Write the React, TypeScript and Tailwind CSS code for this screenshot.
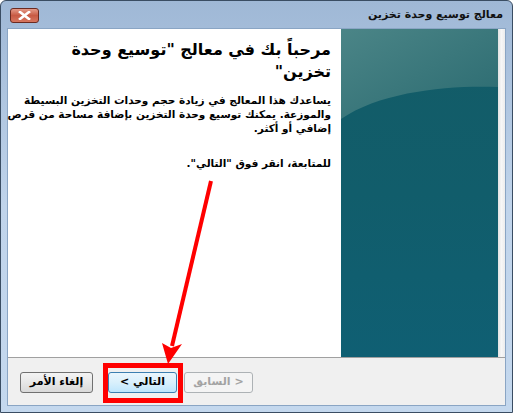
export default function App() {
  const arabic = { fontFamily: '"DejaVu Sans", Tahoma, sans-serif' }

  return (
    <div className="relative w-[513px] h-[413px] overflow-hidden bg-white" style={arabic}>
      {/* window frame */}
      <div className="flex flex-col w-[513px] h-[413px] rounded-t-[6px] border border-[#3a4d63] bg-gradient-to-b from-[#9fb8d6] via-[#c0d4eb] to-[#c4d8ee]">
        {/* title bar */}
        <div className="flex items-center justify-between h-[27px] pl-[9px] pr-[9px] pt-[2px]">
          <div className="flex items-center justify-center w-[29px] h-[15px] rounded-[3px] border border-[#6b2a20] bg-gradient-to-b from-[#e49a88] via-[#c85a44] to-[#d6765f]">
            <svg width="13" height="9" viewBox="0 0 13 9">
              <path d="M2 1 L11 8 M11 1 L2 8" stroke="#ffffff" strokeWidth="2.6" strokeLinecap="square" />
            </svg>
          </div>
          <div dir="rtl" className="text-[11px] font-bold text-[#111111]">
            معالج توسيع وحدة تخزين
          </div>
        </div>

        {/* client area */}
        <div className="flex flex-col flex-1 mx-[6px] mb-[6px] border border-[#8aa5c4] bg-[#f0f0f0]">
          <div className="flex flex-1 bg-white">
            <div className="w-[333px] shrink-0 pt-[10px] pr-[10px] pl-[12px]" dir="rtl">
              <h1 className="text-[16px] font-bold leading-[22px] text-black">
                مرحباً بك في معالج "توسيع وحدة
                <br />
                تخزين"
              </h1>
              <p className="mt-[10px] text-[10.5px] font-bold leading-[14px] text-black whitespace-nowrap">
                يساعدك هذا المعالج في زيادة حجم وحدات التخزين البسيطة
                <br />
                والموزعة. يمكنك توسيع وحدة التخزين بإضافة مساحة من قرص
                <br />
                إضافي أو أكثر.
              </p>
              <p className="mt-[21px] text-[10.5px] font-bold leading-[14px] text-black">
                للمتابعة، انقر فوق "التالي".
              </p>
            </div>
            {/* teal side panel */}
            <div className="relative w-[157px] shrink-0 overflow-hidden bg-gradient-to-b from-[#135c67] via-[#115d6b] to-[#0f5f73]">
              <svg className="absolute inset-0" width="157" height="330" viewBox="0 0 157 330">
                <defs>
                  <linearGradient id="top" x1="0" y1="0" x2="1" y2="1">
                    <stop offset="0" stopColor="#4b8587" />
                    <stop offset="1" stopColor="#2a6a70" />
                  </linearGradient>
                </defs>
                <path d="M0 0 H157 V58 C110 56 40 62 0 90 Z" fill="url(#top)" />
              </svg>
            </div>
            <div className="w-[7px] shrink-0 bg-gradient-to-r from-[#e3e3e3] via-[#f7f7f7] to-[#ececec]" />
          </div>

          {/* bottom button bar */}
          <div className="flex items-center h-[48px] border-t border-[#a0a0a0] bg-[#f0f0f0] pl-[12px] pt-[2px]" dir="ltr">
            <button className="w-[73px] h-[21px] rounded-[3px] border border-[#707070] bg-gradient-to-b from-[#f3f3f3] via-[#e8e8e8] to-[#d9d9d9] text-[11px] font-bold text-black" dir="rtl" style={arabic}>
              إلغاء الأمر
            </button>
            <button className="ml-[15px] w-[69px] h-[21px] rounded-[3px] border border-[#3c7fb1] bg-gradient-to-b from-[#eaf6fd] via-[#d9f0fc] to-[#bee6fd] text-[11px] font-bold text-black" dir="rtl" style={arabic}>
              التالي &gt;
            </button>
            <button className="ml-[7px] w-[69px] h-[21px] rounded-[3px] border border-[#adb2b5] bg-[#f4f4f4] text-[11px] font-bold text-[#a3a3a3]" dir="rtl" style={arabic}>
              &lt; السابق
            </button>
          </div>
        </div>
      </div>

      {/* red annotation: box */}
      <div className="absolute left-[103px] top-[363px] w-[80px] h-[40px] border-[5px] border-[#ff0000]" />
      {/* red annotation: arrow */}
      <svg className="absolute left-0 top-0 pointer-events-none" width="513" height="413" viewBox="0 0 513 413">
        <path d="M211 181 L172 346" stroke="#ff0000" strokeWidth="4" />
        <path d="M168 364 L162 343 L171 348 L182 344 Z" fill="#ff0000" />
      </svg>
    </div>
  )
}
